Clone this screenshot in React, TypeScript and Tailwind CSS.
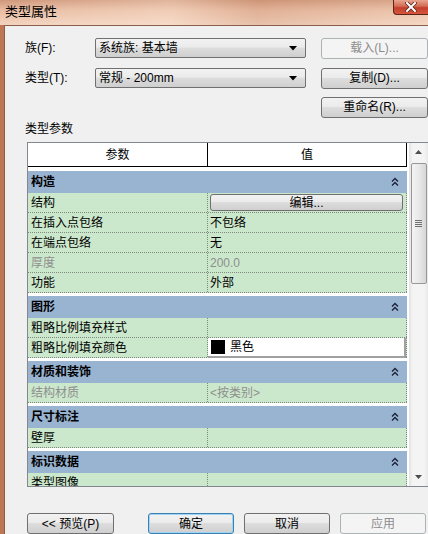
import React from "react";

type Row =
  | { kind: "group"; label: string }
  | { kind: "row"; label: string; value?: string; dim?: boolean; type?: "button" | "color" };

const rows: Row[] = [
  { kind: "group", label: "构造" },
  { kind: "row", label: "结构", value: "编辑...", type: "button" },
  { kind: "row", label: "在插入点包络", value: "不包络" },
  { kind: "row", label: "在端点包络", value: "无" },
  { kind: "row", label: "厚度", value: "200.0", dim: true },
  { kind: "row", label: "功能", value: "外部" },
  { kind: "group", label: "图形" },
  { kind: "row", label: "粗略比例填充样式" },
  { kind: "row", label: "粗略比例填充颜色", value: "黑色", type: "color" },
  { kind: "group", label: "材质和装饰" },
  { kind: "row", label: "结构材质", value: "<按类别>", dim: true },
  { kind: "group", label: "尺寸标注" },
  { kind: "row", label: "壁厚" },
  { kind: "group", label: "标识数据" },
  { kind: "row", label: "类型图像" },
];

function Collapse() {
  return (
    <svg width="8" height="10" viewBox="0 0 8 10" className="block">
      <path d="M1 4.5 L4 1.5 L7 4.5" fill="none" stroke="#1d2238" strokeWidth="1.4" />
      <path d="M1 8.5 L4 5.5 L7 8.5" fill="none" stroke="#1d2238" strokeWidth="1.4" />
    </svg>
  );
}

function Button({
  label,
  disabled,
  focused,
  className = "",
}: {
  label: string;
  disabled?: boolean;
  focused?: boolean;
  className?: string;
}) {
  if (disabled) {
    return (
      <div
        className={`flex h-[21px] items-center justify-center rounded-[3px] border border-[#adb2b5] bg-[#f4f4f4] text-[#8d8d8d] ${className}`}
      >
        {label}
      </div>
    );
  }
  return (
    <div
      className={`flex h-[21px] items-center justify-center rounded-[3px] border ${
        focused ? "border-[#3c7fb1] shadow-[inset_0_0_0_1px_#9fd5f4]" : "border-[#707070]"
      } bg-[linear-gradient(180deg,#f2f2f2_0%,#ebebeb_45%,#dddddd_50%,#cfcfcf_100%)] ${className}`}
    >
      {label}
    </div>
  );
}

function Combo({ text }: { text: string }) {
  return (
    <div className="flex h-[20px] w-[211px] items-center justify-between rounded-[2px] border border-[#707070] bg-[linear-gradient(180deg,#f2f2f2_0%,#ebebeb_45%,#dddddd_50%,#cfcfcf_100%)] pl-[3px] pr-[8px]">
      <span>{text}</span>
      <svg width="8" height="5" viewBox="0 0 8 5">
        <path d="M0 0 L8 0 L4 4.5 Z" fill="#000" />
      </svg>
    </div>
  );
}

function Scrollbar() {
  return (
    <div className="flex w-[19px] flex-col items-center bg-[linear-gradient(90deg,#e3e3e3_0%,#f4f4f4_20%,#f4f4f4_80%,#e8e8e8_100%)]">
      <div className="flex h-[18px] items-center justify-center">
        <svg width="7" height="4" viewBox="0 0 7 4">
          <path d="M0 4 L3.5 0 L7 4 Z" fill="#4d4d4d" />
        </svg>
      </div>
      <div className="mt-[2px] flex h-[121px] w-[16px] items-center justify-center rounded-[2px] border border-[#979797] bg-[linear-gradient(90deg,#f4f4f4_0%,#e8e8e8_50%,#d6d6d6_100%)]">
        <div className="flex flex-col gap-[1px]">
          <div className="h-[1px] w-[7px] bg-[#707070]" />
          <div className="h-[1px] w-[7px] bg-[#707070]" />
          <div className="h-[1px] w-[7px] bg-[#707070]" />
          <div className="h-[1px] w-[7px] bg-[#707070]" />
        </div>
      </div>
      <div className="flex-1" />
      <div className="flex h-[18px] items-center justify-center">
        <svg width="7" height="4" viewBox="0 0 7 4">
          <path d="M0 0 L7 0 L3.5 4 Z" fill="#4d4d4d" />
        </svg>
      </div>
    </div>
  );
}

function TableRow({ row, first }: { row: Row; first: boolean }) {
  if (row.kind === "group") {
    return (
      <div
        className={`${first ? "mt-[4px]" : "mt-[3px]"} flex h-[22px] shrink-0 items-center justify-between bg-[#99b4d1] pl-[3px] pr-[8px] font-bold`}
      >
        <span>{row.label}</span>
        <Collapse />
      </div>
    );
  }
  const text = row.dim ? "text-[#8e8e8e]" : "text-black";
  return (
    <div className="flex h-[20px] shrink-0 border-b border-dotted border-[#7f8a7f] bg-[#cce8cc]">
      <div className={`flex w-[180px] items-center border-r border-dotted border-[#7f8a7f] pl-[3px] ${text}`}>
        {row.label}
      </div>
      <div className={`flex w-[199px] items-center border-r border-dotted border-[#7f8a7f] ${text}`}>
        {row.type === "button" ? (
          <div className="ml-[2px] flex h-[17px] w-[193px] items-center justify-center rounded-[3px] border border-[#707070] bg-[linear-gradient(180deg,#f2f2f2_0%,#ebebeb_45%,#dddddd_50%,#cfcfcf_100%)]">
            {row.value}
          </div>
        ) : row.type === "color" ? (
          <div className="flex h-[20px] w-[198px] items-center border-b-2 border-r-2 border-[#a0a0a0] bg-white pl-[3px]">
            <div className="h-[14px] w-[14px] bg-black" />
            <span className="ml-[5px]">{row.value}</span>
          </div>
        ) : (
          <span className="pl-[2px]">{row.value}</span>
        )}
      </div>
    </div>
  );
}

export default function App() {
  return (
    <div className="flex h-[534px] w-[428px] flex-col overflow-hidden bg-[#bf7654] font-['Liberation_Sans','Noto_Sans_CJK_SC',sans-serif] text-[12px] leading-none text-black">
      {/* title bar */}
      <div className="relative h-[25px] shrink-0 bg-[linear-gradient(180deg,#cf977a_0%,#e8bca2_40%,#f2d3bf_100%)]">
        <div className="absolute inset-0 bg-[linear-gradient(90deg,rgba(255,240,230,0)_0%,rgba(255,235,220,0.35)_40%,rgba(200,140,110,0.25)_60%,rgba(255,235,220,0.2)_100%)]" />
        <span className="absolute left-[5px] top-[5px] text-[13px] text-black">类型属性</span>
        <div className="absolute right-0 top-0 flex h-[15px] w-[35px] items-center justify-center rounded-bl-[4px] border-b border-l border-[#5e2418] bg-[linear-gradient(180deg,#e8a48f_0%,#d46a52_45%,#c2402b_55%,#d7553c_100%)]">
          <svg width="12" height="10" viewBox="0 0 12 10">
            <path d="M2 1 L10 9 M10 1 L2 9" stroke="#5a2a20" strokeWidth="3.6" strokeLinecap="square" />
            <path d="M2 1 L10 9 M10 1 L2 9" stroke="#ffffff" strokeWidth="2" strokeLinecap="square" />
          </svg>
        </div>
      </div>

      {/* body */}
      <div className="ml-[4px] flex flex-1 flex-col border-l border-t border-[#8a5e4a] bg-[#f0f0f0] pl-[20px] pt-[12px]">
        <div className="flex h-[20px] items-center">
          <span className="w-[70px]">族(F):</span>
          <Combo text="系统族: 基本墙" />
          <Button label="载入(L)..." disabled className="ml-[15px] w-[107px]" />
        </div>
        <div className="mt-[10px] flex h-[20px] items-center">
          <span className="w-[70px]">类型(T):</span>
          <Combo text="常规 - 200mm" />
          <Button label="复制(D)..." className="ml-[15px] w-[107px]" />
        </div>
        <div className="mt-[9px] flex h-[20px] items-center">
          <Button label="重命名(R)..." className="ml-[296px] w-[107px]" />
        </div>
        <div className="mt-[4px] flex h-[16px] items-center">类型参数</div>

        {/* parameter table */}
        <div className="ml-[2px] mt-[5px] flex h-[345px] w-[402px] border border-[#828790] bg-white">
          <div className="flex w-[379px] flex-col overflow-hidden">
            <div className="flex h-[24px] shrink-0 border-b border-black">
              <div className="flex w-[180px] items-center justify-center border-r border-black">参数</div>
              <div className="flex w-[199px] items-center justify-center border-r border-black">值</div>
            </div>
            {rows.map((r, i) => (
              <TableRow key={i} row={r} first={i === 0} />
            ))}
          </div>
          <div className="w-[2px]" />
          <Scrollbar />
        </div>

        {/* dialog buttons */}
        <div className="ml-[2px] mt-[26px] flex">
          <Button label="<< 预览(P)" className="w-[87px]" />
          <Button label="确定" focused className="ml-[34px] w-[86px]" />
          <Button label="取消" className="ml-[10px] w-[86px]" />
          <Button label="应用" disabled className="ml-[10px] w-[86px]" />
        </div>
      </div>
    </div>
  );
}
